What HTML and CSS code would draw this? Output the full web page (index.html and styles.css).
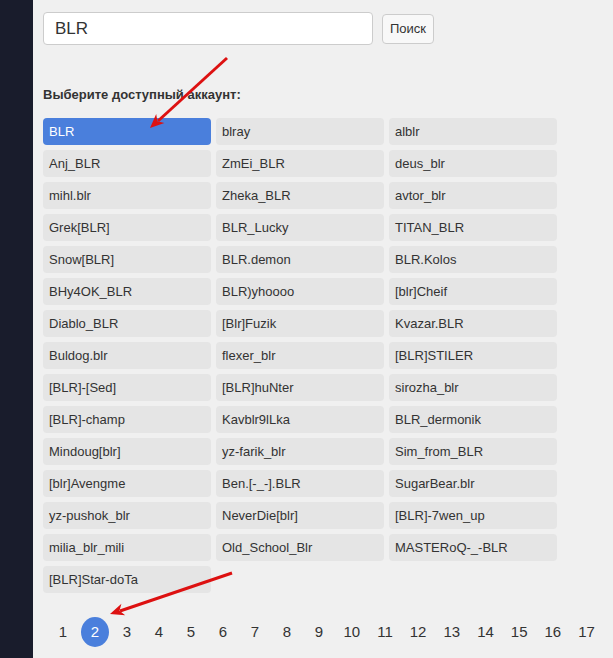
FILE: index.html
```html
<!DOCTYPE html>
<html lang="ru">
<head>
  <meta charset="UTF-8" />
  <meta name="viewport" content="width=device-width, initial-scale=1.0"/>
  <title>Выбор аккаунта</title>
  <link rel="stylesheet" href="styles.css">
</head>
<body>

  <div class="side"></div>

  <div class="main">
    <!-- Search -->
    <form class="search" onsubmit="return false;">
      <input type="text" value="BLR" />
      <button type="submit">Поиск</button>
    </form>

    <h3>Выберите доступный аккаунт:</h3>

    <div class="accounts">
      <a class="acc active">BLR</a>
      <a class="acc">blray</a>
      <a class="acc">alblr</a>
      <a class="acc">Anj_BLR</a>
      <a class="acc">ZmEi_BLR</a>
      <a class="acc">deus_blr</a>
      <a class="acc">mihl.blr</a>
      <a class="acc">Zheka_BLR</a>
      <a class="acc">avtor_blr</a>
      <a class="acc">Grek[BLR]</a>
      <a class="acc">BLR_Lucky</a>
      <a class="acc">TITAN_BLR</a>
      <a class="acc">Snow[BLR]</a>
      <a class="acc">BLR.demon</a>
      <a class="acc">BLR.Kolos</a>
      <a class="acc">BHy4OK_BLR</a>
      <a class="acc">BLR)yhoooo</a>
      <a class="acc">[blr]Cheif</a>
      <a class="acc">Diablo_BLR</a>
      <a class="acc">[Blr]Fuzik</a>
      <a class="acc">Kvazar.BLR</a>
      <a class="acc">Buldog.blr</a>
      <a class="acc">flexer_blr</a>
      <a class="acc">[BLR]STILER</a>
      <a class="acc">[BLR]-[Sed]</a>
      <a class="acc">[BLR]huNter</a>
      <a class="acc">sirozha_blr</a>
      <a class="acc">[BLR]-champ</a>
      <a class="acc">Kavblr9lLka</a>
      <a class="acc">BLR_dermonik</a>
      <a class="acc">Mindoug[blr]</a>
      <a class="acc">yz-farik_blr</a>
      <a class="acc">Sim_from_BLR</a>
      <a class="acc">[blr]Avengme</a>
      <a class="acc">Ben.[-_-].BLR</a>
      <a class="acc">SugarBear.blr</a>
      <a class="acc">yz-pushok_blr</a>
      <a class="acc">NeverDie[blr]</a>
      <a class="acc">[BLR]-7wen_up</a>
      <a class="acc">milia_blr_mili</a>
      <a class="acc">Old_School_Blr</a>
      <a class="acc">MASTERoQ-_-BLR</a>
      <a class="acc">[BLR]Star-doTa</a>
    </div>

    <!-- Pages -->
    <div class="pages">
      <a>1</a>
      <a class="current">2</a>
      <a>3</a>
      <a>4</a>
      <a>5</a>
      <a>6</a>
      <a>7</a>
      <a>8</a>
      <a>9</a>
      <a>10</a>
      <a>11</a>
      <a>12</a>
      <a>13</a>
      <a>14</a>
      <a>15</a>
      <a>16</a>
      <a>17</a>
    </div>
  </div>

  <!-- annotation arrows -->
  <svg class="arrows" width="613" height="658" viewBox="0 0 613 658">
    <line x1="227" y1="58" x2="158" y2="121" />
    <polygon points="150,128 164.4,122.9 157.4,121.2 156.2,114.1" />
    <line x1="232" y1="573" x2="120" y2="611" />
    <polygon points="110,614 125.2,615.2 119.5,610.8 121.4,603.8" />
  </svg>

</body>
</html>
```

FILE: styles.css
```css
body {
  margin: 0;
  background: #f0f0f0;
  color: #333;
  font-family: 'Liberation Sans', Arial, sans-serif;
  display: flex;
  min-height: 658px;
  overflow: hidden;
}

.side {
  width: 33px;
  flex: none;
  background: #191c2c;
}

.main {
  flex: 1;
  padding: 12px 0 0 10px;
}

.search {
  display: flex;
  align-items: center;
  gap: 9px;
  margin: 0;
}

.search input {
  box-sizing: border-box;
  width: 330px;
  height: 33px;
  padding: 0 11px;
  border: 1px solid #ccc;
  border-radius: 4px;
  background: #fff;
  color: #333;
  font-family: inherit;
  font-size: 17px;
}

.search button {
  box-sizing: border-box;
  height: 30px;
  padding: 0 7px;
  border: 1px solid #ccc;
  border-radius: 4px;
  background: #f8f8f8;
  color: #333;
  font-family: inherit;
  font-size: 13px;
}

h3 {
  margin: 42px 0 16px;
  font-size: 13px;
  line-height: 15px;
  font-weight: bold;
  color: #333;
}

.accounts {
  display: grid;
  grid-template-columns: repeat(3, 168px);
  gap: 5px;
}

.acc {
  display: block;
  height: 27px;
  line-height: 27px;
  padding: 0 6px;
  border-radius: 4px;
  background: #e5e5e5;
  color: #333;
  font-size: 13px;
  white-space: nowrap;
}

.acc.active {
  background: #4a7fdc;
  color: #fff;
}

.pages {
  display: flex;
  gap: 4px;
  margin: 24px 0 0 6px;
}

.pages a {
  box-sizing: border-box;
  min-width: 28px;
  height: 30px;
  line-height: 30px;
  padding: 0 6.5px;
  text-align: center;
  font-size: 15px;
  color: #333;
}

.pages a.current {
  background: #4a7fdc;
  color: #fff;
  border-radius: 50%;
}

.arrows {
  position: absolute;
  top: 0;
  left: 0;
  pointer-events: none;
}

.arrows line {
  stroke: #dd1111;
  stroke-width: 3;
}

.arrows polygon {
  fill: #dd1111;
}
```
